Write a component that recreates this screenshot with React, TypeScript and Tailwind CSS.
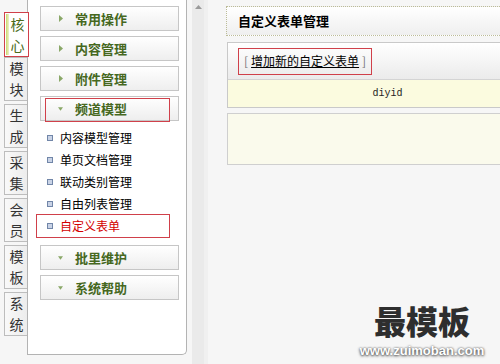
import React from "react";

const cjk = { fontFamily: '"Noto Sans CJK SC", "Noto Sans", sans-serif' };

function Tab({ label, active }: { label: string; active?: boolean }) {
  const chars = label.split("");
  if (active) {
    return (
      <div className="relative z-10 flex h-[45px] w-[25px] flex-col items-center justify-center border border-[#d0404a] bg-white text-[14px] leading-[21px] text-[#4a6a1a]">
        <div className="absolute left-[1px] top-[1px] bottom-[1px] w-[3px] bg-gradient-to-r from-[#c8d86a] to-[#eef2cc]" />
        {chars.map((c, i) => (
          <span key={i} className="pl-[2px]">{c}</span>
        ))}
      </div>
    );
  }
  return (
    <div className="flex h-[44px] w-[24px] flex-col items-center justify-center border border-r-0 border-[#bdbdbd] bg-gradient-to-r from-[#f9f9f9] to-[#ececec] text-[14px] leading-[21px] text-[#333]">
      {chars.map((c, i) => (
        <span key={i}>{c}</span>
      ))}
    </div>
  );
}

function MenuBtn({ label, open, marked }: { label: string; open?: boolean; marked?: boolean }) {
  return (
    <div className="relative flex h-[25px] w-[139px] items-center border border-[#c6c6c6] bg-gradient-to-b from-white to-[#eeeeee]">
      {marked && (
        <div className="absolute left-[4px] top-[1px] h-[24px] w-[125px] border border-[#d0404a]" />
      )}
      <div className="ml-[17px] flex w-[5px] items-center justify-center">
        {open ? (
          <svg width="6" height="4" viewBox="0 0 6 4">
            <path d="M0 0 L6 0 L3 4 Z" fill="#8aa868" />
          </svg>
        ) : (
          <svg width="4" height="7" viewBox="0 0 4 7">
            <path d="M0 0 L4 3.5 L0 7 Z" fill="#8aa868" />
          </svg>
        )}
      </div>
      <span className="ml-[12px] text-[13px] font-bold leading-none text-[#46681e]">{label}</span>
    </div>
  );
}

function SubItem({ label, red }: { label: string; red?: boolean }) {
  return (
    <div className="relative flex h-[22px] items-center">
      {red && <div className="absolute left-[-4px] top-[-1px] h-[24px] w-[134px] border border-[#d0404a]" />}
      <div className="ml-[7px] h-[6px] w-[6px] border border-[#7186a8] bg-[#c9d3e6]" />
      <span className={`ml-[7px] text-[12px] leading-none ${red ? "text-[#d40000]" : "text-black"}`}>{label}</span>
    </div>
  );
}

export default function App() {
  return (
    <div className="relative flex h-[364px] w-[500px] overflow-hidden bg-[#f6f6f6]" style={cjk}>
      {/* left tabs */}
      <div className="flex w-[27px] shrink-0 flex-col pl-[4px] pt-[12px]">
        <Tab label="核心" active />
        <div className="flex flex-col gap-[3px]">
          <Tab label="模块" />
          <Tab label="生成" />
          <Tab label="采集" />
          <Tab label="会员" />
          <Tab label="模板" />
          <Tab label="系统" />
        </div>
      </div>

      {/* sidebar panel */}
      <div className="flex h-[355px] w-[160px] shrink-0 flex-col rounded-br-[5px] border-b border-l border-r border-[#b3b3b3] bg-white pl-[12px] pt-[6px]">
        <div className="flex flex-col gap-[5px]">
          <MenuBtn label="常用操作" />
          <MenuBtn label="内容管理" />
          <MenuBtn label="附件管理" />
          <MenuBtn label="频道模型" open marked />
        </div>
        <div className="mt-[6px] flex flex-col">
          <SubItem label="内容模型管理" />
          <SubItem label="单页文档管理" />
          <SubItem label="联动类别管理" />
          <SubItem label="自由列表管理" />
          <SubItem label="自定义表单" red />
        </div>
        <div className="mt-[8px] flex flex-col gap-[5px]">
          <MenuBtn label="批里维护" open />
          <MenuBtn label="系统帮助" open />
        </div>
      </div>

      {/* splitter / scrollbar strip */}
      <div className="flex w-[39px] shrink-0 pl-[5px]">
        <div className="flex h-full w-[16px] justify-center border-r-[4px] border-[#f0f0f0] bg-[#eaeaea] pt-[5px]">
          <svg width="7" height="4" viewBox="0 0 7 4">
            <path d="M0 4 L3.5 0 L7 4 Z" fill="#9a9a9a" />
          </svg>
        </div>
      </div>

      {/* main */}
      <div className="flex min-w-0 flex-1 flex-col overflow-hidden pt-[6px]">
        <div className="flex h-[30px] w-[330px] shrink-0 items-center border border-dotted border-[#bcbc98] bg-gradient-to-b from-white to-[#efefef] pl-[11px]">
          <span className="text-[13px] font-bold text-black">自定义表单管理</span>
        </div>
        <div className="ml-[1px] mt-[6px] flex w-[321px] shrink-0 flex-col border border-[#c9c9c9]">
          <div className="flex h-[37px] items-center border-b border-[#d4d4d4] bg-gradient-to-b from-white to-[#ebebeb] pl-[10px]">
            <div className="flex h-[27px] items-center border border-[#d0404a] px-[5px] text-[12px]">
              <span className="text-[#777]">[</span>
              <span className="mx-[3px] text-black underline">增加新的自定义表单</span>
              <span className="text-[#777]">]</span>
            </div>
          </div>
          <div className="flex h-[27px] items-center justify-center bg-[#fbfbdf]">
            <span className="text-[10px] text-[#222]" style={{ fontFamily: '"Liberation Mono", monospace' }}>diyid</span>
          </div>
        </div>
        <div className="ml-[1px] mt-[5px] h-[52px] w-[321px] shrink-0 border border-[#cfcfcf] bg-[#fafaec]" />
      </div>

      {/* watermark overlay */}
      <div className="absolute left-[348px] top-[302px] flex w-[148px] flex-col items-center">
        <span className="text-[32px] font-black leading-[36px] text-[#2e2e2e]">最模板</span>
        <span
          className="mt-[6px] text-[13px] font-bold leading-[14px] text-white"
          style={{ fontFamily: '"Liberation Sans", Arial, sans-serif', textShadow: "0 1px 3px #444, 0 0 2px #666" }}
        >
          www.zuimoban.com
        </span>
      </div>
    </div>
  );
}
